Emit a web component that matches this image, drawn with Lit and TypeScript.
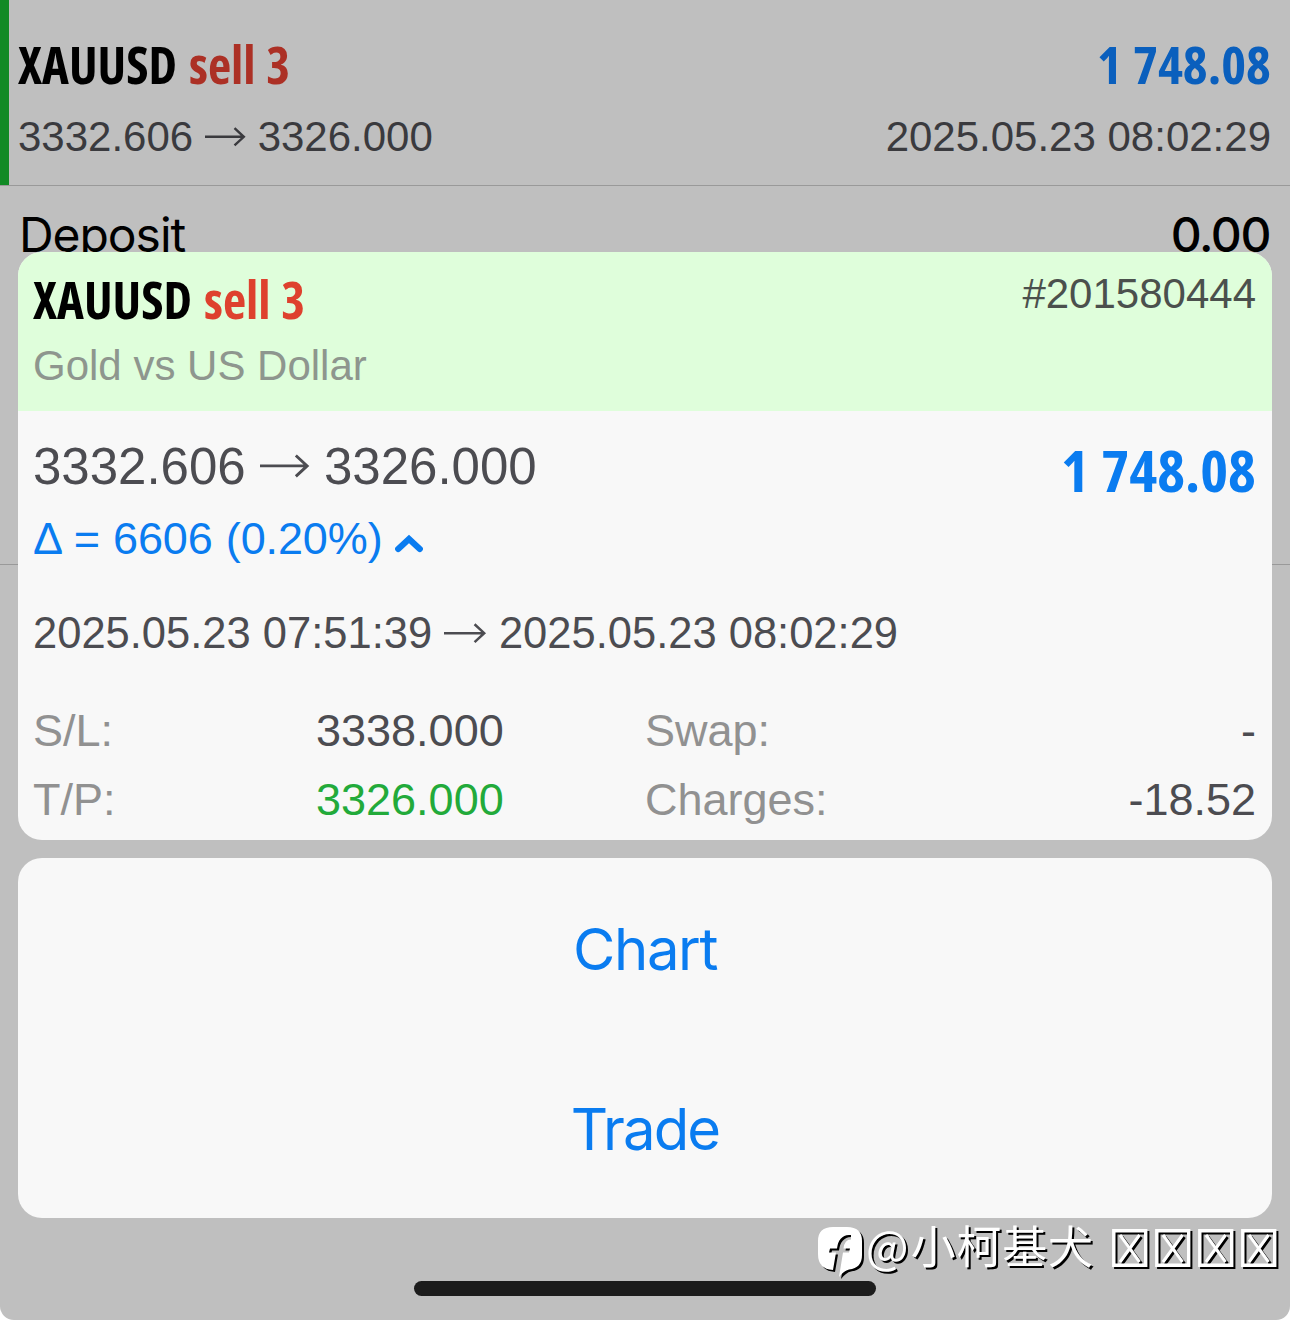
import { LitElement, html, svg, css } from "lit";
import { customElement, property } from "lit/decorators.js";

/** Condensed heading text, squeezed to an exact advance width. */
@customElement("condensed-text")
class CondensedText extends LitElement {
  @property() text = "";
  @property({ type: Number }) width = 100;
  @property({ type: Number }) size = 51;
  static styles = css`
    :host { display: block; flex: none; }
    svg { display: block; overflow: visible; }
    text { font-family: "Open Sans", "Liberation Sans", sans-serif; font-weight: 690; font-stretch: 75%; fill: currentColor; word-spacing: 0.03em; }
  `;
  render() {
    return html`<svg width=${this.width} height=${this.size}>
      ${svg`<text x="0" y=${this.size * 0.8 - 0.8} font-size=${this.size} textLength=${this.width} lengthAdjust="spacingAndGlyphs">${this.text}</text>`}
    </svg>`;
  }
}

@customElement("range-arrow")
class RangeArrow extends LitElement {
  static styles = css`
    :host { display: inline-block; width: 0.965em; height: 0.46em; margin: 0 0.29em 0 0.28em; vertical-align: 0.12em; }
    svg { display: block; width: 100%; height: 100%; overflow: visible; }
    path { fill: none; stroke: currentColor; stroke-width: 2.4; }
  `;
  render() {
    return html`<svg viewBox="0 0 40.5 19.3"><path d="M0 9.8H38.5M29.5 1.2L38.8 9.8L29.5 18.4"/></svg>`;
  }
}

@customElement("app-root")
class AppRoot extends LitElement {
  static styles = css`
    :host { display: block; width: 1290px; height: 1320px; background: #fff; font-family: "Liberation Sans", Arial, sans-serif; }
    .screen { position: relative; width: 1290px; height: 1320px; box-sizing: border-box; background: #bfbfbf; border-radius: 0 0 14px 14px; overflow: hidden; }
    .row { display: flex; justify-content: space-between; }
    .deal { height: 185px; box-sizing: border-box; border-left: 9px solid #118a25; padding: 44px 19px 0 9px; }
    .title { display: flex; gap: 12px; color: #000; }
    .red { color: #ac3025; }
    .blue { color: #0a5fbd; }
    .sub { font-size: 42px; line-height: 50px; margin-top: 17px; color: #3a3a3e; }
    .rule { height: 1px; background: #999; }
    .deposit { padding: 0 19px; height: 378px; font-family: Inter, sans-serif; font-size: 48px; line-height: 98px; letter-spacing: -1.05px; color: #000; }
    .medium { font-weight: 500; letter-spacing: -1.4px; margin-right: 1px; }

    .sheet { position: absolute; left: 18px; top: 252px; width: 1254px; display: flex; flex-direction: column; gap: 18px; }
    .card { background: #f8f8f8; border-radius: 24px; overflow: hidden; }
    .info { height: 588px; }
    .head { height: 159px; box-sizing: border-box; background: #dffedb; padding: 27px 16px 0 15px; }
    .head .red { color: #de412e; }
    .left { display: flex; flex-direction: column; }
    .ticket { font-size: 42px; line-height: 50px; margin-top: -10px; color: #4b504d; }
    .name { font-size: 42px; line-height: 50px; margin-top: 11px; color: #8e968e; }
    .body { padding: 0 16px 0 15px; color: #4c4c51; }
    .prices { height: 101px; }
    .range { font-size: 51px; line-height: 60px; margin-top: 26px; }
    .sum { color: #0a7cf0; margin-top: 36px; }
    .delta { font-size: 45px; line-height: 54px; color: #0a7cf0; display: flex; gap: 12px; word-spacing: 0.8px; letter-spacing: -0.12px; }
    .delta svg { margin-top: 21px; }
    .times { font-size: 43.5px; line-height: 50px; margin-top: 42px; }
    .grid { display: grid; grid-template-columns: 283px 329px 1fr auto; grid-auto-rows: 69px; line-height: 69px; font-size: 45px; margin-top: 38px; }
    .label { color: #919191; }
    .end { text-align: right; }
    .green { color: #22aa3a; }
    .actions { height: 360px; display: flex; flex-direction: column; font-family: Inter, sans-serif; font-size: 58px; letter-spacing: -1.4px; color: #0a7cf0; text-align: center; }
    .action { height: 180px; line-height: 182px; }
    .trade { letter-spacing: -1.9px; }

    .home { position: absolute; left: 414px; top: 1281px; width: 462px; height: 15px; border-radius: 8px; background: #1c1c1c; }
    .mark { position: absolute; left: 818px; top: 1220px; display: flex; align-items: flex-start; filter: drop-shadow(2px 2px 0 #000); color: #fff; font-family: "Noto Sans CJK SC", sans-serif; font-size: 45px; line-height: 50px; letter-spacing: 0.7px; }
    .at { letter-spacing: 2.2px; }
    .mark svg { display: block; flex: none; overflow: visible; }
    .boxes { display: flex; gap: 7.8px; margin: 9px 0 0 18px; }
  `;
  render() {
    return html`<div class="screen">
      <div class="deal">
        <div class="row">
          <div class="title"><condensed-text text="XAUUSD" width="159"></condensed-text><condensed-text class="red" text="sell 3" width="101"></condensed-text></div>
          <condensed-text class="blue" text="1 748.08" width="174"></condensed-text>
        </div>
        <div class="row sub"><div>3332.606<range-arrow></range-arrow>3326.000</div><div>2025.05.23 08:02:29</div></div>
      </div>
      <div class="rule"></div>
      <div class="row deposit"><span>Deposit</span><span class="medium">0.00</span></div>
      <div class="rule"></div>

      <div class="sheet">
        <div class="card info">
          <div class="head row">
            <div class="left">
              <div class="title"><condensed-text text="XAUUSD" width="159"></condensed-text><condensed-text class="red" text="sell 3" width="101"></condensed-text></div>
              <div class="name">Gold vs US Dollar</div>
            </div>
            <div class="ticket">#201580444</div>
          </div>
          <div class="body">
            <div class="row prices"><div class="range">3332.606<range-arrow></range-arrow>3326.000</div><condensed-text class="sum" text="1 748.08" width="195" size="57"></condensed-text></div>
            <div class="delta">Δ = 6606 (0.20%)<svg width="28" height="20" viewBox="0 0 28 20"><path d="M3.2 16L14 6L24.8 16" fill="none" stroke="currentColor" stroke-width="6.2" stroke-linecap="round"/></svg></div>
            <div class="times">2025.05.23 07:51:39<range-arrow></range-arrow>2025.05.23 08:02:29</div>
            <div class="grid">
              <span class="label">S/L:</span><span>3338.000</span><span class="label">Swap:</span><span class="end">-</span>
              <span class="label">T/P:</span><span class="green">3326.000</span><span class="label">Charges:</span><span class="end">-18.52</span>
            </div>
          </div>
        </div>
        <div class="card actions"><div class="action">Chart</div><div class="action trade">Trade</div></div>
      </div>

      <div class="home"></div>
      <div class="mark">
        <svg width="48" height="58" viewBox="0 0 48 58"><path fill="#fff" d="M15 7H29Q44 7 44 21V35Q44 48 31 49.5Q26 50.5 21 57L25 32.5H31L32 28.5H25.5Q26.5 19.5 33 19.5V15H31Q20.5 15.5 19 28.5H12L11 32.5H18L15 50Q0 49 0 34V21Q0 7 15 7Z"/></svg>
        <span><span class="at">@</span>小柯基犬</span>
        <div class="boxes">${[0, 1, 2, 3].map(() => html`<svg width="35.5" height="38" viewBox="0 0 35.5 38"><path d="M1.8 1.7H33.7V36.2H1.8Z" fill="none" stroke="#fff" stroke-width="3.4"/><path d="M8 6L27.5 33M27.5 6L8 33" fill="none" stroke="#fff" stroke-width="3"/></svg>`)}</div>
      </div>
    </div>`;
  }
}
